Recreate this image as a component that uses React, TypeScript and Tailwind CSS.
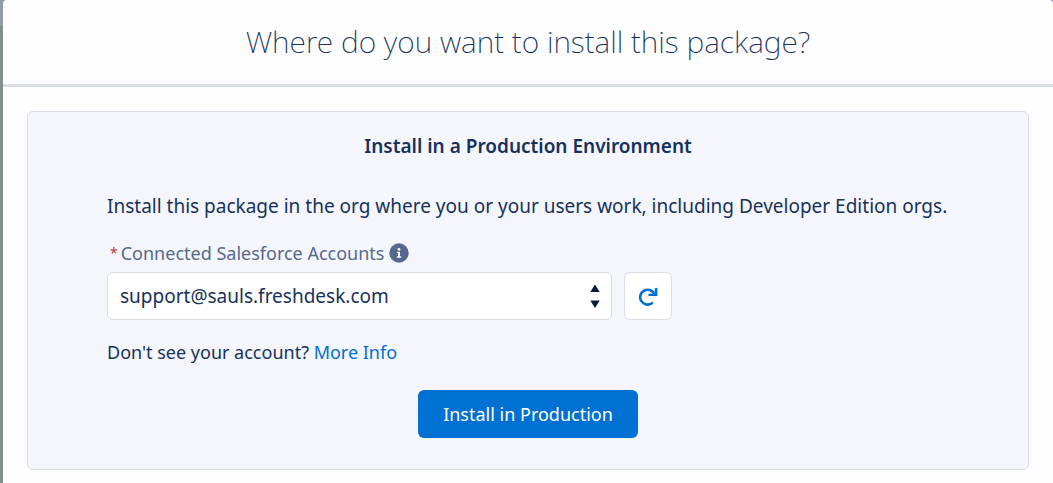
import React, { useState } from 'react';

const ACCOUNTS = ['support@sauls.freshdesk.com'];

const InfoIcon: React.FC = () => (
  <svg viewBox="0 0 20 20" className="w-5 h-5" aria-hidden="true">
    <circle cx="10" cy="10" r="9.7" fill="#54698d" />
    <circle cx="10" cy="6.3" r="1.4" fill="#fff" />
    <path d="M8 8.7h3v4.6h1.2v1.4H7.9v-1.4H9v-3.2H8z" fill="#fff" />
  </svg>
);

const RefreshIcon: React.FC = () => (
  <svg viewBox="0 0 20 20" className="w-5 h-5" aria-hidden="true">
    <path d="M13.9 17.2A7.4 7.4 0 1 1 16.2 7.8" fill="none" stroke="#0070d2" strokeWidth="2.6" strokeLinecap="round" />
    <path d="M19.4 1.8v8.1h-8.9V7.8l6.2-.3V2.2z" fill="#0070d2" />
  </svg>
);

const SelectArrows: React.FC = () => (
  <svg viewBox="0 0 10 24" className="absolute right-3 top-3 w-[10px] h-6 pointer-events-none" aria-hidden="true">
    <path d="M5 .5l4.7 7.5H.3zM5 24l4.7-7.5H.3z" fill="#061c3f" />
  </svg>
);

const App: React.FC = () => {
  const [account, setAccount] = useState(ACCOUNTS[0]);

  return (
    <div className="min-h-screen bg-[linear-gradient(#929baa_0_26px,#858e8e_26px)] pl-[3px] font-['Noto_Sans',sans-serif] text-[#16325c]">
      <main className="min-h-screen rounded-t bg-[#fdfdfe]">
        <header className="border-b-3 border-[#d8dde6] py-5 text-center">
          <h1 className="text-[30px] leading-[44px] font-extralight">Where do you want to install this package?</h1>
        </header>

        <div className="px-6 pt-6 pb-3">
          <section className="rounded-md border border-[#d8dde6] bg-[#f4f6fb] px-[79px] pt-5 pb-[31px]">
            <h2 className="text-center text-[19px] leading-7 font-semibold">Install in a Production Environment</h2>
            <p className="mt-8 text-[19px] leading-7">
              Install this package in the org where you or your users work, including Developer Edition orgs.
            </p>

            <div className="mt-[21px] flex items-center gap-1 pl-[3px] text-[18px] leading-6 text-[#54698d]">
              <label htmlFor="account" className="flex gap-[3px]">
                <abbr title="required" className="text-[14px] text-[#c23934] no-underline">*</abbr>
                Connected Salesforce Accounts
              </label>
              <InfoIcon />
            </div>

            <div className="mt-[7px] flex gap-3">
              <div className="relative w-[505px]">
                <select
                  id="account"
                  value={account}
                  onChange={(e) => setAccount(e.target.value)}
                  className="h-12 w-full appearance-none rounded-md border border-[#d8dde6] bg-white px-3 text-[19px]"
                >
                  {ACCOUNTS.map((name) => (
                    <option key={name} value={name}>{name}</option>
                  ))}
                </select>
                <SelectArrows />
              </div>
              <button type="button" aria-label="Refresh accounts" className="flex h-12 w-12 items-center justify-center rounded-md border border-[#d8dde6] bg-white">
                <RefreshIcon />
              </button>
            </div>

            <p className="mt-5 text-[18px] leading-6">
              Don't see your account? <a href="#more-info" className="text-[#0070d2]">More Info</a>
            </p>

            <div className="mt-[26px] text-center">
              <button type="button" className="h-12 w-[220px] rounded-md bg-[#0070d2] text-[18px] text-white">
                Install in Production
              </button>
            </div>
          </section>
        </div>
      </main>
    </div>
  );
};

export default App;
